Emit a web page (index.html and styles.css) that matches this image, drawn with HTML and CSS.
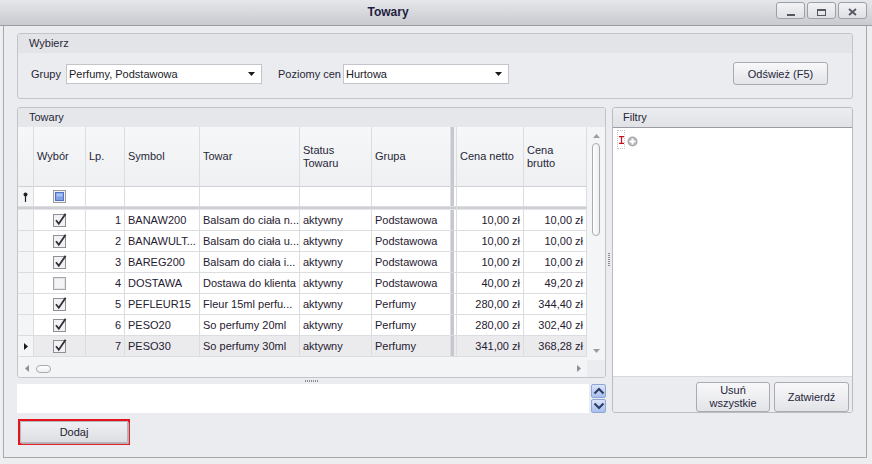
FILE: index.html
```html
<!DOCTYPE html>
<html lang="pl">
<head>
<meta charset="utf-8">
<title>Towary</title>
<link rel="stylesheet" href="styles.css">
</head>
<body>
<svg class="defs" width="0" height="0" aria-hidden="true">
  <symbol id="chk" viewBox="0 0 14 14">
    <rect x="0.5" y="1.5" width="12" height="12" fill="#f2f2f4" stroke="#8e9096"/>
    <path d="M3 7.2 L5.8 10.8 L12.6 0.8" fill="none" stroke="#303139" stroke-width="1.8"/>
  </symbol>
  <symbol id="unchk" viewBox="0 0 14 14">
    <rect x="0.5" y="1.5" width="12" height="12" fill="#f4f4f6" stroke="#a4a6ab"/>
    <rect x="1.5" y="2.5" width="10" height="10" fill="none" stroke="#e2e3e6"/>
  </symbol>
</svg>
<div class="window">
  <div class="titlebar">
    <div class="title">Towary</div>
    <div class="wctrls">
      <div class="wbtn"><svg width="27" height="15" viewBox="0 0 27 15"><rect x="10" y="11" width="8" height="2" fill="#555660"/></svg></div>
      <div class="wbtn"><svg width="27" height="15" viewBox="0 0 27 15"><rect x="9.5" y="6.5" width="8" height="6" fill="none" stroke="#555660"/><rect x="9" y="6" width="9" height="2" fill="#555660"/></svg></div>
      <div class="wbtn"><svg width="27" height="15" viewBox="0 0 27 15"><path d="M10 6 L17 12 M17 6 L10 12" stroke="#555660" stroke-width="1.8" fill="none"/></svg></div>
    </div>
  </div>
  <div class="client">
    <div class="group wybierz">
      <div class="ghead">Wybierz</div>
      <div class="wbody">
        <span class="lbl lbl-grupy">Grupy</span>
        <div class="combo combo-grupy"><span class="ctext">Perfumy, Podstawowa</span><svg class="carr" width="7" height="4" viewBox="0 0 7 4"><path d="M0 0 H7 L3.5 4 Z" fill="#1a1a1a"/></svg></div>
        <span class="lbl lbl-poz">Poziomy cen</span>
        <div class="combo combo-poz"><span class="ctext">Hurtowa</span><svg class="carr" width="7" height="4" viewBox="0 0 7 4"><path d="M0 0 H7 L3.5 4 Z" fill="#1a1a1a"/></svg></div>
        <div class="spacer"></div>
        <div class="btn refresh">Odśwież (F5)</div>
      </div>
    </div>

    <div class="main">
      <div class="leftcol">
        <div class="group towary">
          <div class="ghead">Towary</div>
          <div class="gridmain">
            <div class="tarea">
              <div class="row hdr">
                <div class="c ind"></div>
                <div class="c">Wybór</div>
                <div class="c">Lp.</div>
                <div class="c">Symbol</div>
                <div class="c">Towar</div>
                <div class="c">Status<br>Towaru</div>
                <div class="c">Grupa</div>
                <div class="c fix"></div>
                <div class="c">Cena netto</div>
                <div class="c">Cena<br>brutto</div>
              </div>
              <div class="row flt">
                <div class="c ind"><svg width="5" height="10" viewBox="0 0 5 10"><circle cx="2.5" cy="2.5" r="2" fill="#222"/><path d="M2.5 4 V10" stroke="#222" stroke-width="1.2"/></svg></div>
                <div class="c ctr"><svg width="13" height="13" viewBox="0 0 13 13"><rect x="0.5" y="0.5" width="12" height="12" fill="#f3f3f5" stroke="#9a9ca2"/><rect x="2.5" y="2.5" width="8" height="8" fill="#7f9fe6" stroke="#4f72c4"/><rect x="3.5" y="3.5" width="6" height="3" fill="#a9c1f2"/></svg></div>
                <div class="c"></div><div class="c"></div><div class="c"></div><div class="c"></div><div class="c"></div>
                <div class="c fix"></div>
                <div class="c"></div><div class="c"></div>
              </div>
              <div class="row sep">
                <div class="c"></div><div class="c"></div><div class="c"></div><div class="c"></div><div class="c"></div><div class="c"></div><div class="c"></div>
                <div class="c fix"></div>
                <div class="c"></div><div class="c"></div>
              </div>
              <div class="row data">
                <div class="c ind"></div>
                <div class="c ctr"><svg width="14" height="14"><use href="#chk"/></svg></div>
                <div class="c num">1</div><div class="c">BANAW200</div><div class="c">Balsam do ciała n...</div><div class="c">aktywny</div><div class="c">Podstawowa</div>
                <div class="c fix"></div>
                <div class="c num">10,00 zł</div><div class="c num">10,00 zł</div>
              </div>
              <div class="row data">
                <div class="c ind"></div>
                <div class="c ctr"><svg width="14" height="14"><use href="#chk"/></svg></div>
                <div class="c num">2</div><div class="c">BANAWULT...</div><div class="c">Balsam do ciała u...</div><div class="c">aktywny</div><div class="c">Podstawowa</div>
                <div class="c fix"></div>
                <div class="c num">10,00 zł</div><div class="c num">10,00 zł</div>
              </div>
              <div class="row data">
                <div class="c ind"></div>
                <div class="c ctr"><svg width="14" height="14"><use href="#chk"/></svg></div>
                <div class="c num">3</div><div class="c">BAREG200</div><div class="c">Balsam do ciała i...</div><div class="c">aktywny</div><div class="c">Podstawowa</div>
                <div class="c fix"></div>
                <div class="c num">10,00 zł</div><div class="c num">10,00 zł</div>
              </div>
              <div class="row data">
                <div class="c ind"></div>
                <div class="c ctr"><svg width="14" height="14"><use href="#unchk"/></svg></div>
                <div class="c num">4</div><div class="c">DOSTAWA</div><div class="c">Dostawa do klienta</div><div class="c">aktywny</div><div class="c">Podstawowa</div>
                <div class="c fix"></div>
                <div class="c num">40,00 zł</div><div class="c num">49,20 zł</div>
              </div>
              <div class="row data">
                <div class="c ind"></div>
                <div class="c ctr"><svg width="14" height="14"><use href="#chk"/></svg></div>
                <div class="c num">5</div><div class="c">PEFLEUR15</div><div class="c">Fleur 15ml perfu...</div><div class="c">aktywny</div><div class="c">Perfumy</div>
                <div class="c fix"></div>
                <div class="c num">280,00 zł</div><div class="c num">344,40 zł</div>
              </div>
              <div class="row data">
                <div class="c ind"></div>
                <div class="c ctr"><svg width="14" height="14"><use href="#chk"/></svg></div>
                <div class="c num">6</div><div class="c">PESO20</div><div class="c">So perfumy 20ml</div><div class="c">aktywny</div><div class="c">Perfumy</div>
                <div class="c fix"></div>
                <div class="c num">280,00 zł</div><div class="c num">302,40 zł</div>
              </div>
              <div class="row data focused">
                <div class="c ind"><svg width="4" height="7" viewBox="0 0 4 7"><path d="M0 0 L4 3.5 L0 7 Z" fill="#1a1a1a"/></svg></div>
                <div class="c ctr"><svg width="14" height="14"><use href="#chk"/></svg></div>
                <div class="c num">7</div><div class="c">PESO30</div><div class="c">So perfumy 30ml</div><div class="c">aktywny</div><div class="c">Perfumy</div>
                <div class="c fix"></div>
                <div class="c num">341,00 zł</div><div class="c num">368,28 zł</div>
              </div>
            </div>
            <div class="vscroll">
              <div class="sarrow up"><svg width="7" height="4" viewBox="0 0 7 4"><path d="M0 4 L3.5 0 L7 4 Z" fill="#9c9da3"/></svg></div>
              <div class="vthumb"></div>
              <div class="spacer"></div>
              <div class="sarrow down"><svg width="7" height="4" viewBox="0 0 7 4"><path d="M0 0 L3.5 4 L7 0 Z" fill="#9c9da3"/></svg></div>
            </div>
          </div>
          <div class="hscroll">
            <div class="harrow"><svg width="4" height="7" viewBox="0 0 4 7"><path d="M4 0 L0 3.5 L4 7 Z" fill="#8e8f95"/></svg></div>
            <div class="hthumb"></div>
            <div class="spacer"></div>
            <div class="harrow"><svg width="4" height="7" viewBox="0 0 4 7"><path d="M0 0 L4 3.5 L0 7 Z" fill="#8e8f95"/></svg></div>
            <div class="corner"></div>
          </div>
        </div>
        <div class="hsplit"><span class="grip-h"></span></div>
        <div class="memorow">
          <div class="memo"></div>
          <div class="spins">
            <div class="spin"><svg width="12" height="8" viewBox="0 0 12 8"><path d="M1.5 6.5 L6 2 L10.5 6.5" fill="none" stroke="#2c3f66" stroke-width="2.2"/></svg></div>
            <div class="spin"><svg width="12" height="8" viewBox="0 0 12 8"><path d="M1.5 1.5 L6 6 L10.5 1.5" fill="none" stroke="#2c3f66" stroke-width="2.2"/></svg></div>
          </div>
        </div>
        <div class="dodajwrap"><div class="btn dodaj">Dodaj</div></div>
      </div>
      <div class="vsplit"><span class="grip-v"></span></div>
      <div class="filtry">
        <div class="fhead">Filtry</div>
        <div class="fbody">
          <span class="curbox"><svg width="5" height="8" viewBox="0 0 5 8"><path d="M0 0.6 H5 M0 7.4 H5 M2.5 0.6 V7.4" stroke="#c4121c" stroke-width="1.2" fill="none"/></svg></span>
          <svg class="plus" width="11" height="11" viewBox="0 0 11 11"><circle cx="5.5" cy="5.5" r="5" fill="#a5a6ab"/><circle cx="5.5" cy="5.5" r="4" fill="#b3b4b9"/><path d="M5.5 2.5 V8.5 M2.5 5.5 H8.5" stroke="#fff" stroke-width="2"/></svg>
        </div>
        <div class="fbar">
          <div class="btn fbtn usun">Usuń<br>wszystkie</div>
          <div class="btn fbtn zatw">Zatwierdź</div>
        </div>
      </div>
    </div>
  </div>
</div>
</body>
</html>
```
FILE: styles.css
```css
* { box-sizing: border-box; }
html, body { margin: 0; padding: 0; }
body {
  width: 872px;
  height: 464px;
  overflow: hidden;
  font-family: "Liberation Sans", Arial, sans-serif;
  font-size: 11px;
  color: #1f2030;
  background: #eceef0;
}
.defs { display: block; width: 0; height: 0; overflow: hidden; }
svg { display: block; }

.window {
  width: 872px;
  height: 464px;
  display: flex;
  flex-direction: column;
  background: #eceef0;
}

/* title bar */
.titlebar {
  flex: none;
  height: 26px;
  display: flex;
  align-items: flex-start;
  background: linear-gradient(#e6e7ea, #d9dade 45%, #c9cacf);
  border-bottom: 1px solid #9c9da4;
}
.title {
  flex: 1;
  text-align: center;
  font-weight: bold;
  font-size: 12px;
  line-height: 25px;
  color: #1e2140;
}
.wctrls {
  display: flex;
  gap: 2px;
  padding-top: 2px;
  margin-right: 5px;
}
.wbtn {
  width: 29px;
  height: 17px;
  border: 1px solid #9ea0a7;
  border-radius: 3px;
  background: linear-gradient(#f3f3f5, #dfe0e4);
}

/* client */
.client {
  flex: 1;
  margin: 0 5px 6px 3px;
  border: 1px solid #a6a8ae;
  border-top: none;
  background: #ebecef;
  padding: 7px 13px 0 13px;
  display: flex;
  flex-direction: column;
  gap: 8px;
}

.group {
  border: 1px solid #c2c4c9;
  border-radius: 3px;
  background: #ebecef;
  overflow: hidden;
}
.ghead {
  height: 19px;
  line-height: 19px;
  padding-left: 11px;
  background: #e2e4e8;
  color: #272838;
}

/* wybierz */
.wybierz { height: 66px; flex: none; }
.wbody {
  display: flex;
  align-items: center;
  padding: 6px 24px 0 13px;
  height: 29px;
  box-sizing: content-box;
}
.lbl { color: #262737; white-space: nowrap; }
.lbl-grupy { width: 27px; }
.lbl-poz { width: 59px; margin-left: 16px; }
.combo {
  height: 20px;
  background: #fff;
  border: 1px solid #c3c5ca;
  display: flex;
  align-items: center;
  padding: 0 3px 0 2px;
}
.combo-grupy { width: 196px; margin-left: 8px; }
.combo-poz { width: 166px; margin-left: 6px; }
.ctext { flex: 1; white-space: nowrap; color: #1a1b28; }
.carr { margin-right: 3px; }
.spacer { flex: 1; }

.btn {
  border: 1px solid #a9abb1;
  border-radius: 3px;
  background: linear-gradient(#f8f8fa, #e3e4e8);
  display: flex;
  align-items: center;
  justify-content: center;
  text-align: center;
  color: #24253a;
}
.refresh { width: 95px; height: 23px; }

/* main area */
.main {
  flex: 1;
  display: flex;
  align-items: flex-start;
}
.leftcol {
  width: 589px;
  display: flex;
  flex-direction: column;
}
.towary {
  height: 271px;
  display: flex;
  flex-direction: column;
}
.towary .ghead { background: #e6e7eb; }

.gridmain {
  display: flex;
  height: 233px;
}
.tarea {
  width: 569px;
  background: #f4f5f7;
}
.row {
  display: grid;
  grid-template-columns: 16px 52px 39px 75px 100px 72px 79px 6px 67px 63px;
}
.c {
  display: flex;
  align-items: center;
  padding: 0 3px;
  white-space: nowrap;
  overflow: hidden;
  border-right: 1px solid #dcdde1;
  border-bottom: 1px solid #dcdde1;
  background: #fff;
}
.hdr { height: 60px; }
.hdr .c {
  background: linear-gradient(#f6f7f8, #eff0f2);
  border-bottom-color: #d0d1d5;
  line-height: 13px;
  color: #262738;
}
.flt { height: 20px; }
.sep { height: 3px; }
.sep .c {
  background: #cfd0d4;
  border-right: none;
  border-bottom: 1px solid #e4e5e8;
}
.data { height: 21px; }
.c.ind {
  background: #f4f5f7;
  justify-content: center;
  padding: 0;
}
.hdr .c.ind { background: linear-gradient(#f6f7f8, #eff0f2); }
.c.ctr { justify-content: center; padding: 0; }
.c.num { justify-content: flex-end; padding-right: 3px; }
.c.fix {
  padding: 0;
  background: linear-gradient(to right, #c7c8cd 0, #c7c8cd 3px, #ffffff 3px);
}
.hdr .c.fix { background: linear-gradient(to right, #c7c8cd 0, #c7c8cd 3px, #f2f3f5 3px); }
.sep .c.fix { background: linear-gradient(to right, #c7c8cd 0, #c7c8cd 3px, #cfd0d4 3px); border-right: 1px solid #dcdde1; }
.focused .c { background: #ebebee; }
.focused .c.ind { background: #f4f5f7; }
.focused .c.fix { background: linear-gradient(to right, #c7c8cd 0, #c7c8cd 3px, #ebebee 3px); }

/* scrollbars */
.vscroll {
  width: 18px;
  background: #f4f5f7;
  display: flex;
  flex-direction: column;
  align-items: center;
}
.sarrow {
  display: flex;
  align-items: center;
  justify-content: center;
  width: 18px;
}
.sarrow.up { height: 16px; padding-top: 1px; }
.sarrow.down { height: 18px; }
.vthumb {
  width: 8px;
  height: 93px;
  border: 1px solid #a9abb0;
  border-radius: 4px;
  background: linear-gradient(to right, #ffffff, #eceef1);
}
.hscroll {
  height: 17px;
  display: flex;
  align-items: center;
  background: #f3f4f6;
}
.harrow {
  width: 17px;
  height: 17px;
  display: flex;
  align-items: center;
  justify-content: center;
}
.hthumb {
  width: 15px;
  height: 8px;
  margin-left: 1px;
  border: 1px solid #a9abb0;
  border-radius: 4px;
  background: linear-gradient(#ffffff, #eceef1);
}
.corner {
  width: 18px;
  height: 17px;
  background: #ebecef;
}

/* splitters */
.hsplit {
  height: 6px;
  display: flex;
  justify-content: center;
  align-items: center;
}
.grip-h {
  width: 14px;
  height: 2px;
  background: repeating-linear-gradient(to right, #8b8c92 0, #8b8c92 1px, transparent 1px, transparent 2px);
}
.vsplit {
  width: 6px;
  align-self: stretch;
  display: flex;
  justify-content: center;
  padding-top: 146px;
}
.grip-v {
  width: 2px;
  height: 14px;
  background: repeating-linear-gradient(#8b8c92 0, #8b8c92 1px, transparent 1px, transparent 2px);
}

.memorow {
  height: 29px;
  display: flex;
  gap: 2px;
}
.memo {
  flex: 1;
  background: #fff;
}
.spins {
  width: 15px;
  display: flex;
  flex-direction: column;
  gap: 1px;
}
.spin {
  height: 14px;
  border: 1px solid #8fa6d4;
  border-radius: 2px;
  background: linear-gradient(#dbe5fa, #a9bfee);
  display: flex;
  align-items: center;
  justify-content: center;
}

.dodajwrap {
  margin-top: 6px;
  margin-left: 1px;
  width: 112px;
  height: 26px;
  border: 2px solid #e3141d;
}
.dodaj {
  height: 22px;
  border: 1px solid #b4b6bb;
  border-radius: 1px;
  background: linear-gradient(#eff0f3, #dcdee2);
  box-shadow: 1px 1px 1px #b9bbc0;
  color: #1e2033;
}

/* filtry */
.filtry {
  width: 241px;
  height: 306px;
  border: 1px solid #babcc1;
  border-radius: 3px;
  background: #fff;
  display: flex;
  flex-direction: column;
  overflow: hidden;
}
.fhead {
  height: 20px;
  line-height: 19px;
  padding-left: 10px;
  background: linear-gradient(#ecedf0, #e0e2e6);
  border-bottom: 1px solid #9a9ca3;
  color: #252637;
  flex: none;
}
.fbody {
  flex: 1;
  display: flex;
  align-items: flex-start;
  padding: 2px 0 0 4px;
  background: #fff;
}
.curbox {
  width: 8px;
  height: 19px;
  border: 1px dotted #c4c5ca;
  display: flex;
  align-items: center;
  justify-content: center;
}
.plus { margin-left: 2px; margin-top: 6px; }
.fbar {
  flex: none;
  height: 36px;
  border-top: 1px solid #d7d8dc;
  background: #ebecef;
  display: flex;
  justify-content: flex-end;
  gap: 4px;
  padding: 5px 3px 0 0;
}
.fbtn { height: 30px; line-height: 13px; }
.usun { width: 74px; }
.zatw { width: 75px; }
```
